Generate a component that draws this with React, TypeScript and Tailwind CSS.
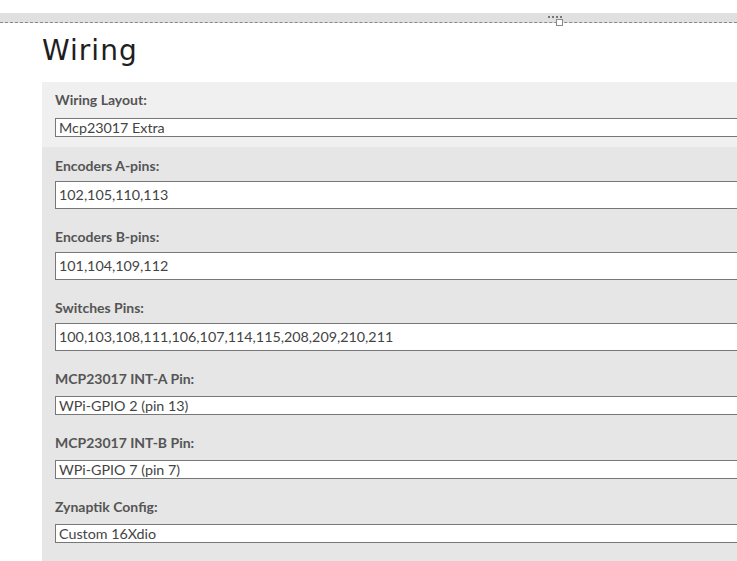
const fields = [
  { label: 'Encoders A-pins:', value: '102,105,110,113', kind: 'text' },
  { label: 'Encoders B-pins:', value: '101,104,109,112', kind: 'text' },
  { label: 'Switches Pins:', value: '100,103,108,111,106,107,114,115,208,209,210,211', kind: 'text' },
  { label: 'MCP23017 INT-A Pin:', value: 'WPi-GPIO 2 (pin 13)', kind: 'select' },
  { label: 'MCP23017 INT-B Pin:', value: 'WPi-GPIO 7 (pin 7)', kind: 'select' },
  { label: 'Zynaptik Config:', value: 'Custom 16Xdio', kind: 'select' },
]

function Field({ label, value, kind }: { label: string; value: string; kind: string }) {
  const isText = kind === 'text'
  return (
    <div className={isText ? 'mb-[18px]' : 'mb-[18px] last:mb-0'}>
      <div className={`h-5 leading-5 text-[14px] font-bold text-[#555] ${isText ? 'mb-[5px]' : 'mb-[7px]'}`}>
        {label}
      </div>
      <div
        className={`bg-white border border-[#777] pl-[3px] text-[14.3px] text-[#444] flex items-center ${
          isText ? 'h-[28px]' : 'h-[19px]'
        }`}
      >
        {value}
      </div>
    </div>
  )
}

export default function App() {
  return (
    <div className="w-[737px] h-[561px] overflow-hidden bg-white relative" style={{ fontFamily: 'Lato, "Open Sans", sans-serif' }}>
      {/* top toolbar strip */}
      <div className="mt-[13px] h-[10px] bg-[#e0e0e0] border-b border-dashed border-[#888]" />
      <div className="absolute left-[548px] top-[16px] flex gap-[2px]">
        <span className="w-[2px] h-[2px] bg-[#777]" />
        <span className="w-[2px] h-[2px] bg-[#777]" />
        <span className="w-[2px] h-[2px] bg-[#777]" />
        <span className="w-[2px] h-[2px] bg-[#777]" />
      </div>
      <div className="absolute left-[556px] top-[19px] w-[7px] h-[7px] bg-white border border-[#888]" />

      <h1
        className="ml-[42px] mt-[7px] h-[52px] leading-[42px] text-[28px] text-[#1e1e1e] tracking-[1px]"
        style={{ fontFamily: '"DejaVu Sans", sans-serif' }}
      >
        Wiring
      </h1>

      <div className="ml-[42px] w-[760px]">
        <div className="bg-[#f0f0f0] pt-[8px] pb-[10px] pl-[13px]">
          <div className="h-5 leading-5 text-[14px] font-bold text-[#555] mb-[8px]">Wiring Layout:</div>
          <div className="bg-white border border-[#777] pl-[3px] text-[14.3px] text-[#444] h-[19px] flex items-center">
            Mcp23017 Extra
          </div>
        </div>
        <div className="bg-[#e6e6e6] pt-[9px] pb-[20px] pl-[13px]">
          {fields.map(f => (
            <Field key={f.label} {...f} />
          ))}
        </div>
      </div>
    </div>
  )
}
